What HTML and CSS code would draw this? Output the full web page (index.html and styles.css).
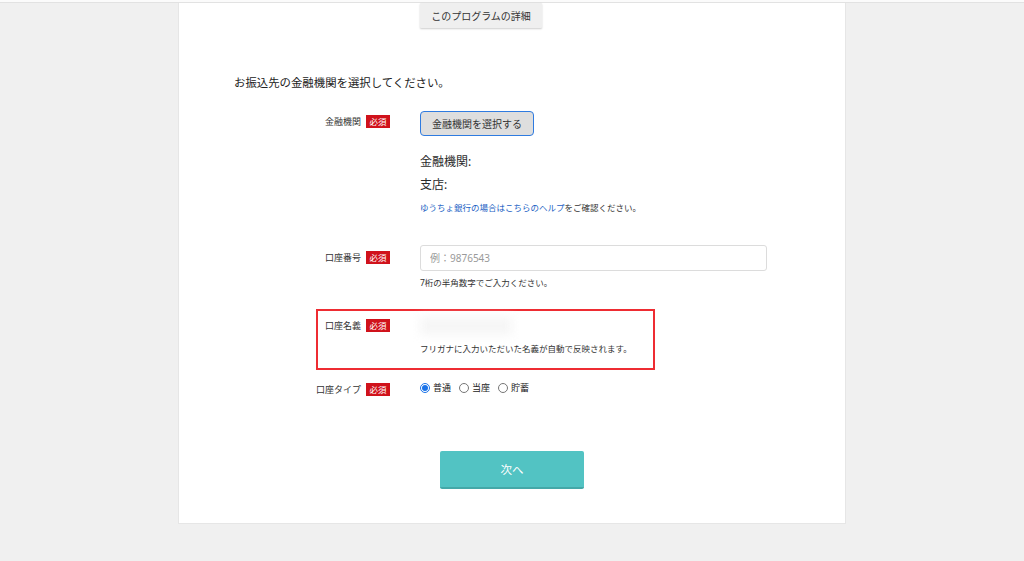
FILE: index.html
```html
<!DOCTYPE html>
<html lang="ja">
<head>
    <meta charset="UTF-8">
    <meta name="viewport" content="width=device-width, initial-scale=1.0">
    <title>お振込先の登録</title>
    <link rel="stylesheet" href="styles.css">
</head>
<body>
    <div class="topbar"></div>

    <div class="card">
        <div class="row top-row">
            <div class="label-cell"></div>
            <div class="field-cell">
                <button class="detail-button">このプログラムの詳細</button>
            </div>
        </div>

        <p class="lead">お振込先の金融機関を選択してください。</p>

        <div class="row bank-row">
            <div class="label-cell">
                <span class="label">金融機関</span>
                <span class="badge">必須</span>
            </div>
            <div class="field-cell">
                <button class="select-button">金融機関を選択する</button>
                <div class="bank-info">金融機関:</div>
                <div class="bank-info branch">支店:</div>
                <p class="help"><a href="#">ゆうちょ銀行の場合はこちらのヘルプ</a>をご確認ください。</p>
            </div>
        </div>

        <div class="row number-row">
            <div class="label-cell">
                <span class="label">口座番号</span>
                <span class="badge">必須</span>
            </div>
            <div class="field-cell">
                <input type="text" class="text-input" placeholder="例：9876543">
                <p class="note">7桁の半角数字でご入力ください。</p>
            </div>
        </div>

        <div class="row name-row">
            <!-- red annotation box around this row -->
            <div class="highlight"></div>
            <div class="label-cell">
                <span class="label">口座名義</span>
                <span class="badge">必須</span>
            </div>
            <div class="field-cell">
                <div class="blurred-name"></div>
                <p class="note">フリガナに入力いただいた名義が自動で反映されます。</p>
            </div>
        </div>

        <div class="row type-row">
            <div class="label-cell">
                <span class="label">口座タイプ</span>
                <span class="badge">必須</span>
            </div>
            <div class="field-cell radios">
                <label class="radio"><input type="radio" name="type" checked> 普通</label>
                <label class="radio"><input type="radio" name="type"> 当座</label>
                <label class="radio"><input type="radio" name="type"> 貯蓄</label>
            </div>
        </div>

        <div class="actions">
            <button class="next-button">次へ</button>
        </div>
    </div>
</body>
</html>
```

FILE: styles.css
```css
body {
    margin: 0;
    background-color: #f0f0f0;
    font-family: "Noto Sans", "Noto Sans CJK JP", sans-serif;
    color: #333;
}

.topbar {
    height: 2px;
    background-color: #fbfbfb;
    border-bottom: 1px solid #e2e2e2;
}

.card {
    margin: 0 auto;
    background-color: #fff;
    border: 1px solid #e6e6e6;
    border-top: none;
    padding: 0 0 34px 55px;
    box-sizing: content-box;
    width: 611px;
}

.row {
    display: grid;
    grid-template-columns: 156px 347px;
    column-gap: 30px;
    position: relative;
}

.label-cell {
    display: flex;
    justify-content: flex-end;
    align-items: center;
    gap: 5px;
    height: 19px;
}

.label {
    font-size: 9px;
    color: #333;
}

.badge {
    display: inline-block;
    background-color: #d0121b;
    color: #fff;
    font-size: 8.5px;
    line-height: 13px;
    height: 13px;
    padding: 0 3.5px;
}

/* top button */
.detail-button {
    width: 122px;
    height: 25px;
    border: none;
    border-radius: 1px;
    background-color: #efefef;
    box-shadow: 0 1px 2px rgba(0, 0, 0, 0.2);
    font-family: inherit;
    font-size: 10px;
    color: #333;
    padding: 0;
}

.lead {
    margin: 47px 0 20px;
    font-size: 11.4px;
    line-height: 16px;
    color: #222;
}

/* bank row */
.bank-row .label-cell {
    height: 21px;
}

.select-button {
    width: 114px;
    height: 25px;
    background-color: #dedede;
    border: 1.5px solid #2f7be0;
    border-radius: 4px;
    font-family: inherit;
    font-size: 10px;
    color: #333;
    padding: 0;
}

.bank-info {
    font-size: 12px;
    line-height: 18px;
    margin-top: 17px;
    color: #2a2a2a;
}

.bank-info.branch {
    margin-top: 5px;
}

.help {
    margin: 8px 0 0;
    font-size: 8.5px;
    line-height: 12px;
    color: #333;
}

.help a {
    color: #1c5fc4;
    text-decoration: none;
}

/* account number */
.number-row {
    margin-top: 31px;
}

.number-row .label-cell {
    height: 24px;
}

.text-input {
    width: 347px;
    height: 26px;
    box-sizing: border-box;
    border: 1px solid #dcdcdc;
    border-radius: 3px;
    padding: 0 9px;
    font-family: inherit;
    font-size: 10px;
    display: block;
}

.text-input::placeholder {
    color: #9a9a9a;
}

.note {
    margin: 6px 0 0;
    font-size: 8.5px;
    line-height: 12px;
    color: #333;
}

/* account name */
.name-row {
    margin-top: 26px;
}

.name-row .label-cell {
    height: 20px;
}

.highlight {
    position: absolute;
    left: 82px;
    top: -6px;
    width: 339px;
    height: 61px;
    box-sizing: border-box;
    border: 2px solid #ee2c32;
}

.blurred-name {
    width: 92px;
    height: 18px;
    margin-top: 2px;
    background-color: #f6f6f6;
    filter: blur(5px);
}

.name-row .note {
    margin-top: 8px;
}

/* account type */
.type-row {
    margin-top: 27px;
}

.type-row .label-cell {
    height: 14px;
}

.radios {
    display: flex;
    gap: 8px;
    align-items: center;
    height: 11px;
}

.radio {
    display: flex;
    align-items: center;
    gap: 2px;
    font-size: 9px;
    color: #222;
}

.radio input {
    width: 10px;
    height: 10px;
    margin: 0 1px 0 0;
    accent-color: #1a73e8;
}

/* next */
.actions {
    display: flex;
    justify-content: center;
    margin: 55px 0 0 -55px;
}

.next-button {
    width: 144px;
    height: 38px;
    background-color: #52c3c3;
    border: none;
    border-bottom: 2px solid #44a8a8;
    border-radius: 2px;
    color: #fff;
    font-family: inherit;
    font-size: 11.5px;
    padding: 0;
}
```
